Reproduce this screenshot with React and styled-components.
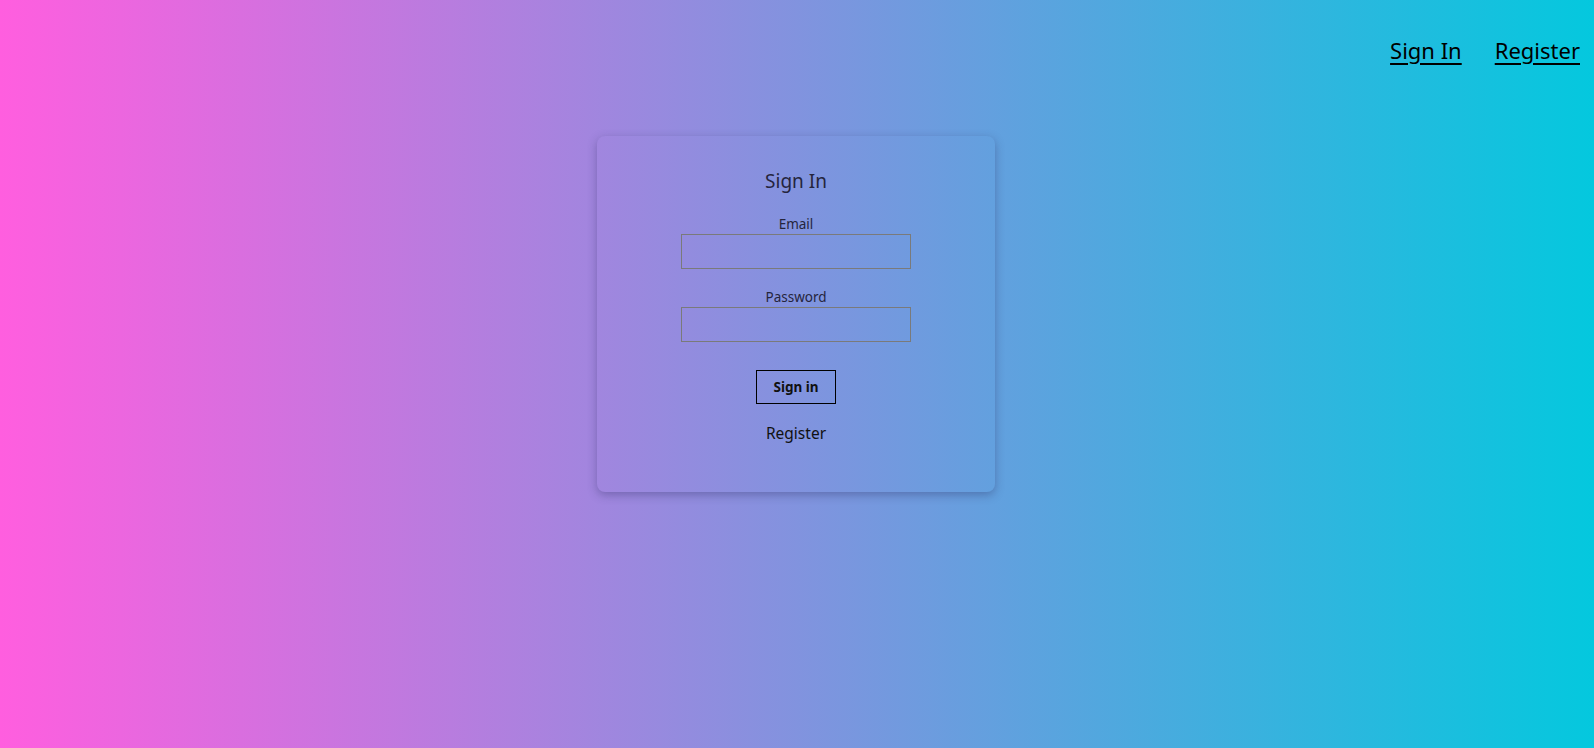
import React from 'react';
import styled, { createGlobalStyle } from 'styled-components';

const GlobalStyle = createGlobalStyle`
  html, body {
    margin: 0;
    padding: 0;
  }
  body {
    font-family: "Noto Sans", "Open Sans", sans-serif;
  }
`;

const Page = styled.div`
  min-height: 100vh;
  background: linear-gradient(to right, #ff5edf, #04c8de);
  display: flex;
  flex-direction: column;
  align-items: center;
`;

const Nav = styled.nav`
  align-self: stretch;
  display: flex;
  justify-content: flex-end;
  gap: 33px;
  padding: 34px 14px 0 0;

  a {
    color: #000;
    font-size: 22px;
    line-height: 32px;
    text-decoration: underline;
    text-underline-offset: 4px;
  }
`;

const Card = styled.div`
  box-sizing: border-box;
  width: 398px;
  margin-top: 70px;
  margin-right: 2px;
  padding: 31px 0 48px;
  border-radius: 8px;
  box-shadow: 0 3px 10px rgba(40, 40, 90, 0.35);
  display: flex;
  flex-direction: column;
  align-items: center;
`;

const Title = styled.h2`
  margin: 0 0 19px;
  font-size: 19px;
  line-height: 28px;
  font-weight: 400;
  color: #25253d;
`;

const Field = styled.div`
  display: flex;
  flex-direction: column;
  align-items: center;
  margin-bottom: ${(p) => p.$gap}px;
`;

const Label = styled.label`
  font-size: 13.5px;
  line-height: 20px;
  color: #25253d;
`;

const Input = styled.input`
  box-sizing: border-box;
  width: 230px;
  height: 35px;
  border: 1px solid #7a7a7a;
  background: transparent;
  outline: none;
  padding: 0 8px;
`;

const Button = styled.button`
  box-sizing: border-box;
  width: 80px;
  height: 34px;
  border: 1px solid #000;
  background: transparent;
  font-family: inherit;
  font-size: 13.5px;
  font-weight: 700;
  color: #111;
  cursor: pointer;
  margin-bottom: 18px;
`;

const CardLink = styled.a`
  font-size: 15.5px;
  line-height: 22px;
  color: #111;
  text-decoration: none;
`;

export default function App() {
  return (
    <>
      <GlobalStyle />
      <Page>
        <Nav>
          <a href="#">Sign In</a>
          <a href="#">Register</a>
        </Nav>
        <Card>
          <Title>Sign In</Title>
          <Field $gap={18}>
            <Label htmlFor="email">Email</Label>
            <Input id="email" type="email" />
          </Field>
          <Field $gap={28}>
            <Label htmlFor="password">Password</Label>
            <Input id="password" type="password" />
          </Field>
          <Button>Sign in</Button>
          <CardLink href="#">Register</CardLink>
        </Card>
      </Page>
    </>
  );
}
